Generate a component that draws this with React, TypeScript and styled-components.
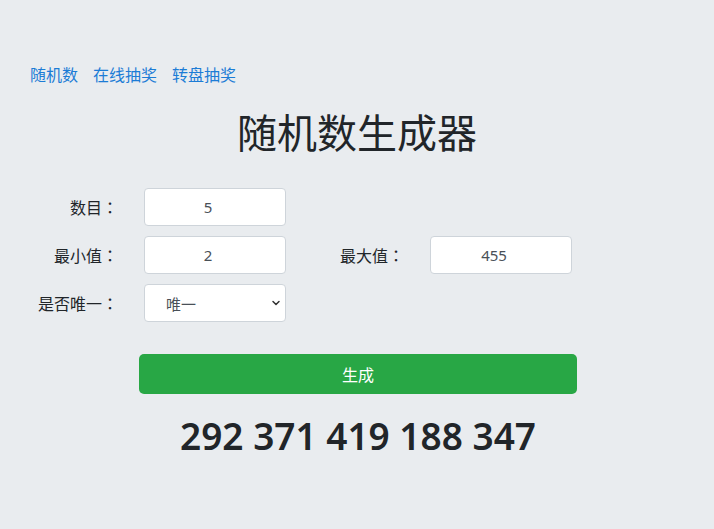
import { useState } from 'react';
import styled, { createGlobalStyle } from 'styled-components';
import { ChevronDown } from 'lucide-react';

const GlobalStyle = createGlobalStyle`
  body {
    margin: 0;
    background: #e9ecef;
    font-family: "Noto Sans", "Noto Sans CJK SC", sans-serif;
    color: #212529;
  }
`;

const Page = styled.div`
  padding: 63px 30px 40px;
`;

const Nav = styled.nav`
  display: flex;
  gap: 15px;
  font-size: 16px;
  line-height: 24px;
`;

const NavLink = styled.a`
  color: #1c7cd6;
  text-decoration: none;
`;

const Title = styled.h1`
  margin: 20px 0 33px;
  text-align: center;
  font-size: 40px;
  font-weight: 400;
  line-height: 48px;
  font-family: "Noto Sans CJK SC", sans-serif;
`;

const Form = styled.div`
  display: grid;
  grid-template-columns: 114px 142px 144px 142px;
  row-gap: 10px;
  align-items: center;
`;

const Label = styled.label`
  text-align: right;
  padding-right: 26px;
  font-size: 16px;
  font-family: "Noto Sans CJK TC", "Noto Sans CJK SC", sans-serif;
  color: #212529;
`;

const Field = styled.input`
  box-sizing: border-box;
  width: 142px;
  height: 38px;
  padding: 0 14px 0 0;
  border: 1px solid #ced4da;
  border-radius: 4px;
  background: #fff;
  text-align: center;
  font-size: 15px;
  color: #495057;
  font-family: "Noto Sans", sans-serif;
  outline: none;
`;

const SelectWrap = styled.div`
  position: relative;
  width: 142px;
  height: 38px;
`;

const Select = styled.select`
  box-sizing: border-box;
  width: 100%;
  height: 100%;
  appearance: none;
  border: 1px solid #ced4da;
  border-radius: 4px;
  background: #fff;
  padding-left: 21px;
  font-size: 15px;
  color: #495057;
  font-family: "Noto Sans CJK SC", sans-serif;
  outline: none;
`;

const Chevron = styled(ChevronDown)`
  position: absolute;
  right: 4px;
  top: 13px;
  pointer-events: none;
  color: #333;
`;

const Actions = styled.div`
  display: flex;
  flex-direction: column;
  align-items: center;
  margin-top: 32px;
  padding-left: 2px;
`;

const GenerateButton = styled.button`
  width: 438px;
  height: 40px;
  border: none;
  border-radius: 5px;
  background: #28a745;
  color: #fff;
  font-size: 16px;
  font-family: "Noto Sans CJK SC", sans-serif;
  cursor: pointer;
`;

const Result = styled.div`
  margin-top: 19px;
  font-size: 37px;
  font-weight: 600;
  line-height: 46px;
  color: #212529;
  font-family: "Noto Sans", sans-serif;
`;

function App() {
  const [count, setCount] = useState('5');
  const [min, setMin] = useState('2');
  const [max, setMax] = useState('455');
  const [unique, setUnique] = useState('1');
  const [result, setResult] = useState([292, 371, 419, 188, 347]);

  const generate = () => {
    const n = parseInt(count) || 0;
    const lo = parseInt(min) || 0;
    const hi = parseInt(max) || 0;
    const out: number[] = [];
    while (out.length < n) {
      const v = lo + Math.floor(Math.random() * (hi - lo + 1));
      if (unique === '1' && out.includes(v) && hi - lo + 1 >= n) continue;
      out.push(v);
    }
    setResult(out);
  };

  return (
    <Page>
      <GlobalStyle />
      <Nav>
        <NavLink href='#'>随机数</NavLink>
        <NavLink href='#'>在线抽奖</NavLink>
        <NavLink href='#'>转盘抽奖</NavLink>
      </Nav>

      <Title>随机数生成器</Title>

      <Form>
        <Label>数目：</Label>
        <Field value={count} onChange={(e) => setCount(e.target.value)} />
        <span />
        <span />

        <Label>最小值：</Label>
        <Field value={min} onChange={(e) => setMin(e.target.value)} />
        <Label>最大值：</Label>
        <Field value={max} onChange={(e) => setMax(e.target.value)} />

        <Label>是否唯一：</Label>
        <SelectWrap>
          <Select value={unique} onChange={(e) => setUnique(e.target.value)}>
            <option value='1'>唯一</option>
            <option value='0'>不唯一</option>
          </Select>
          <Chevron size={12} strokeWidth={3} />
        </SelectWrap>
      </Form>

      <Actions>
        <GenerateButton onClick={generate}>生成</GenerateButton>
        <Result>{result.join(' ')}</Result>
      </Actions>
    </Page>
  );
}

export default App;
